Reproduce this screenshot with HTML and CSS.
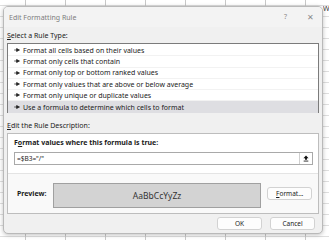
FILE: index.html
```html
<!DOCTYPE html>
<html>
<head>
<meta charset="utf-8">
<link rel="stylesheet" href="styles.css">
</head>
<body>
<div class="sheet">
  <div class="colw">W</div>
  <div class="dialog">
    <div class="titlebar">
      <span class="title">Edit Formatting Rule</span>
      <span class="tbtns"><span class="help">?</span><span class="close">✕</span></span>
    </div>
    <div class="content">
      <div class="label"><u>S</u>elect a Rule Type:</div>
      <div class="list">
        <div class="row"><svg class="arr" viewBox="0 0 7 5"><path d="M0 2.5H3.5M3 0.6L6.6 2.5L3 4.4Z" stroke="#222" stroke-width="0.9" fill="#222"/></svg>Format all cells based on their values</div>
        <div class="row"><svg class="arr" viewBox="0 0 7 5"><path d="M0 2.5H3.5M3 0.6L6.6 2.5L3 4.4Z" stroke="#222" stroke-width="0.9" fill="#222"/></svg>Format only cells that contain</div>
        <div class="row"><svg class="arr" viewBox="0 0 7 5"><path d="M0 2.5H3.5M3 0.6L6.6 2.5L3 4.4Z" stroke="#222" stroke-width="0.9" fill="#222"/></svg>Format only top or bottom ranked values</div>
        <div class="row"><svg class="arr" viewBox="0 0 7 5"><path d="M0 2.5H3.5M3 0.6L6.6 2.5L3 4.4Z" stroke="#222" stroke-width="0.9" fill="#222"/></svg>Format only values that are above or below average</div>
        <div class="row"><svg class="arr" viewBox="0 0 7 5"><path d="M0 2.5H3.5M3 0.6L6.6 2.5L3 4.4Z" stroke="#222" stroke-width="0.9" fill="#222"/></svg>Format only unique or duplicate values</div>
        <div class="row sel"><svg class="arr" viewBox="0 0 7 5"><path d="M0 2.5H3.5M3 0.6L6.6 2.5L3 4.4Z" stroke="#222" stroke-width="0.9" fill="#222"/></svg>Use a formula to determine which cells to format</div>
      </div>
      <div class="label desc"><u>E</u>dit the Rule Description:</div>
      <div class="descbox">
        <div class="top">
          <div class="blabel">F<u>o</u>rmat values where this formula is true:</div>
          <div class="input"><span class="val">=$B3="/"</span><span class="upbtn"><svg viewBox="0 0 7 8"><path d="M3.5 0.5L6.5 3.6H4.6V5.5H2.4V3.6H0.5Z" fill="#111"/><path d="M0.8 7H6.2" stroke="#111" stroke-width="1"/></svg></span></div>
        </div>
        <div class="bottom">
          <span class="blabel">Preview:</span>
          <div class="preview">AaBbCcYyZz</div>
          <div class="btn fmt"><u>F</u>ormat...</div>
        </div>
      </div>
      <div class="actions">
        <div class="btn">OK</div>
        <div class="btn">Cancel</div>
      </div>
    </div>
  </div>
</div>
</body>
</html>
```
FILE: styles.css
```css
html, body { margin: 0; padding: 0; }
body {
  width: 329px; height: 240px; overflow: hidden;
  font-family: "Noto Sans", "Open Sans", sans-serif;
  color: #1b1b1b;
}
.sheet {
  position: relative;
  width: 329px; height: 240px;
  background-color: #fff;
  background-image:
    linear-gradient(to right, #c8c8c8 1px, transparent 1px),
    linear-gradient(to bottom, #dedede 1px, transparent 1px);
  background-size: 40px 100%, 100% 11px;
  background-position: 25px 0, 0 5px;
  padding: 6px 0 0 3px;
  box-sizing: border-box;
}
.colw {
  position: absolute; right: 0; top: 4px;
  font-size: 7px; color: #333; width: 6px; overflow: hidden;
}
.dialog {
  width: 320px; height: 228px;
  background: #f0f0f0;
  border: 1px solid #b9b9b9;
  border-radius: 5px;
  box-shadow: 0 1px 4px rgba(0,0,0,0.25);
  box-sizing: border-box;
  display: flex; flex-direction: column;
  overflow: hidden;
}
.titlebar {
  height: 20px; flex: none;
  background: #f3f3f3;
  display: flex; align-items: center; justify-content: space-between;
  padding: 0 8px 0 5px;
}
.title { font-size: 7px; color: #7d7d7d; }
.tbtns { display: flex; gap: 20px; color: #8a8a8a; font-size: 7px; }
.close { font-size: 7.5px; }
.content { padding: 4px 3px 0 3px; flex: 1; display: flex; flex-direction: column; }
.label { font-size: 7px; line-height: 10px; margin-bottom: 2px; }
.desc { margin-top: 8px; }
.list {
  border: 1px solid #7b7b7b;
  background: #fff;
  height: 70px;
  box-sizing: border-box;
  padding-top: 1px;
}
.row {
  height: 11.3px; line-height: 11px;
  font-size: 7px;
  display: flex; align-items: center;
  padding-left: 6px;
  border-bottom: 1px solid #f2f2f2;
  box-sizing: border-box;
  white-space: nowrap;
}
.row.sel { background: #dedee2; border-bottom: none; }
.arr { width: 6px; height: 4px; margin-right: 3px; flex: none; }
.descbox {
  border: 1px solid #bdbdbd;
  height: 81px;
  box-sizing: border-box;
  display: flex; flex-direction: column;
}
.top {
  background: #fff;
  padding: 4px 5px 8px 6px;
  border-bottom: 1px solid #e4e4e4;
}
.blabel { font-size: 7px; font-weight: bold; color: #1b1b1b; }
.top .blabel { line-height: 10px; margin-bottom: 4px; }
.input {
  height: 13px; border: 1px solid #a9a9a9; box-sizing: border-box;
  display: flex; align-items: center; justify-content: space-between;
  padding-left: 2px;
}
.val { font-size: 6.5px; }
.upbtn {
  width: 12px; height: 11px; border-left: 1px solid #d0d0d0;
  display: flex; align-items: center; justify-content: center;
}
.upbtn svg { width: 6px; height: 7px; }
.bottom {
  flex: 1; background: #f9f9f9;
  display: flex; align-items: center;
  padding: 0 6px 0 9px;
}
.bottom .blabel { width: 36px; }
.preview {
  width: 211px; height: 25px;
  background: #d3d3d3; border: 1px solid #a0a0a0; box-sizing: border-box;
  display: flex; align-items: center; justify-content: center;
  font-size: 8.5px; color: #333;
  margin-right: 6px;
  margin-top: 3px;
}
.btn {
  width: 45px; height: 13px; box-sizing: border-box;
  background: #fdfdfd; border: 1px solid #d2d2d2; border-radius: 3px;
  font-size: 6.5px; display: flex; align-items: center; justify-content: center;
}
.fmt { margin-top: -1px; }
.actions {
  display: flex; justify-content: flex-end; gap: 8px;
  margin-top: 3px; padding-right: 4px;
}
```
